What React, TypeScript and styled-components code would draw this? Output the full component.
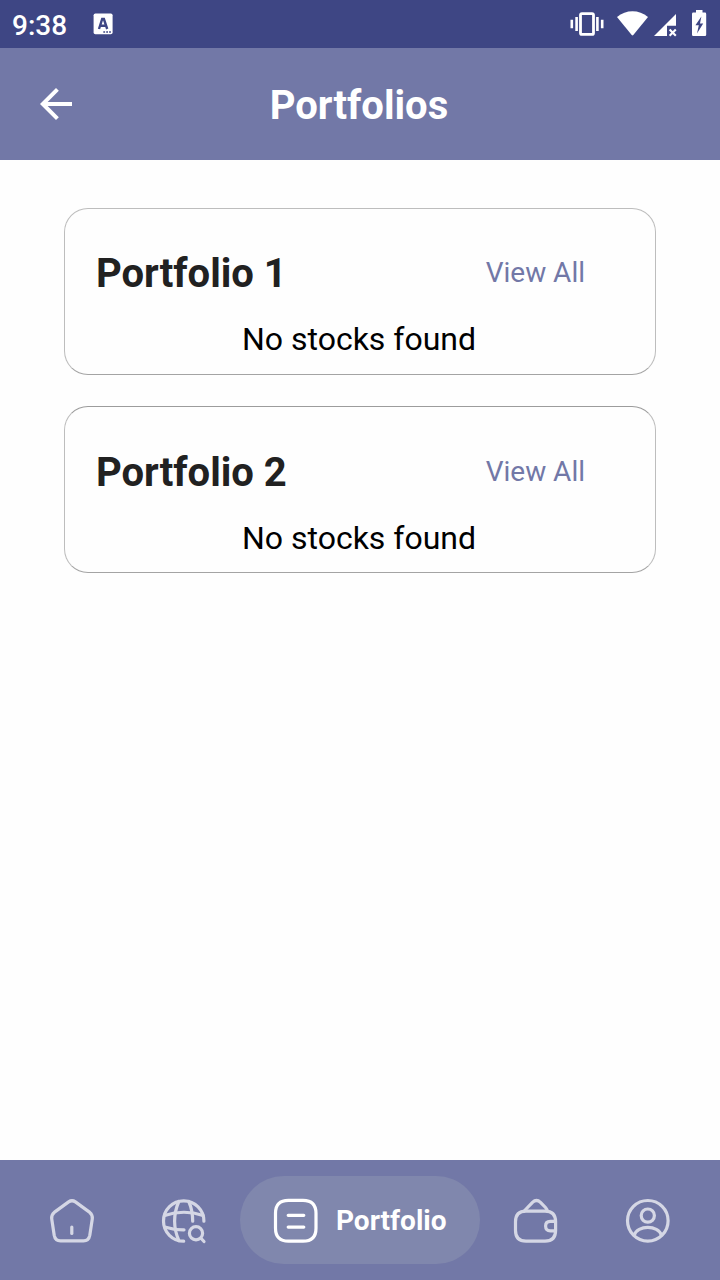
import React from "react";
import styled, { createGlobalStyle } from "styled-components";

const GlobalStyle = createGlobalStyle`
  * { box-sizing: border-box; }
  body {
    margin: 0;
    background: #fefefe;
    font-family: Roboto, "Liberation Sans", sans-serif;
  }
  button { border: 0; background: none; padding: 0; font: inherit; color: inherit; }
`;

const Screen = styled.div`
  display: flex;
  flex-direction: column;
  width: 720px;
  height: 1280px;
  overflow: hidden;
  background: #fefefe;
`;

const StatusBar = styled.div`
  display: flex;
  align-items: center;
  flex: 0 0 48px;
  padding: 0 12px;
  background: #3e4684;
  color: #fff;
`;

const Clock = styled.span`
  width: 80px;
  padding-top: 3px;
  font-size: 28px;
  font-weight: 500;
  line-height: 32px;
`;

const StatusIcons = styled.div`
  display: flex;
  align-items: center;
  margin-left: auto;
`;

const Glyph = styled.svg`
  display: block;
  flex: none;
`;

const Header = styled.header`
  display: grid;
  grid-template-columns: 48px 1fr 48px;
  align-items: center;
  flex: 0 0 112px;
  padding: 0 32px;
  background: #7278a7;
  color: #fff;
`;

const Title = styled.h1`
  margin: 0;
  padding: 3px 2px 0 0;
  text-align: center;
  font-size: 40px;
  font-weight: 700;
  line-height: 49px;
`;

const Content = styled.main`
  display: flex;
  flex: 1;
  flex-direction: column;
  gap: 31px;
  padding: 48px 64px;
`;

const Card = styled.section<{ $edge: string; $top: number }>`
  height: 167px;
  padding: ${(p) => p.$top}px 31px 0;
  border: 1px solid #bdbdbd;
  border-top-color: ${(p) => p.$edge};
  border-bottom-color: #a4a4a4;
  border-radius: 24px;
`;

const CardHead = styled.div`
  display: flex;
  align-items: center;
  justify-content: space-between;
  height: 48px;
  padding-right: 39px;
`;

const CardTitle = styled.h2`
  margin: 0;
  padding-top: 2px;
  color: #212121;
  font-size: 40px;
  font-weight: 700;
  line-height: 48px;
`;

const ViewAll = styled.button`
  color: #7278a7;
  font-size: 28px;
  line-height: 34px;
`;

const Empty = styled.p`
  margin: 23px 0 0;
  padding-right: 2px;
  color: #000;
  text-align: center;
  font-size: 32px;
  line-height: 38px;
`;

const NavBar = styled.nav`
  display: flex;
  align-items: center;
  flex: 0 0 120px;
  padding: 0 16px;
  background: #7278a7;
`;

const NavItem = styled.button<{ $active?: boolean }>`
  display: flex;
  align-items: center;
  justify-content: ${(p) => (p.$active ? "flex-start" : "center")};
  gap: 16px;
  width: ${(p) => (p.$active ? "240px" : "112px")};
  height: 88px;
  padding: ${(p) => (p.$active ? "0 0 0 32px" : "0")};
  border-radius: 44px;
  background: ${(p) => (p.$active ? "#8087ad" : "transparent")};
  color: ${(p) => (p.$active ? "#fff" : "#d5d7e5")};
  font-size: 28px;
  font-weight: 700;
`;

const NavGlyph = ({ children }: { children: React.ReactNode }) => (
  <Glyph width="48" height="48" viewBox="0 -1 48 48" fill="none" stroke="currentColor" strokeWidth="3.2" strokeLinecap="round" strokeLinejoin="round">
    {children}
  </Glyph>
);

const HomeIcon = () => (
  <NavGlyph>
    <path d="M20.6 4.9 6.2 15.4Q3.3 17.8 3.7 21.8L6.2 38.2Q7.2 43.8 12.5 43.8H35.5Q40.8 43.8 41.8 38.2L44.3 21.8Q44.7 17.8 41.8 15.4L27.4 4.9Q24 2.6 20.6 4.9Z" />
    <path d="M23.8 30V36.5" />
  </NavGlyph>
);

const GlobeIcon = () => (
  <NavGlyph>
    <path d="M43.9 24.2A20.2 20.2 0 1 0 23.7 44.2" />
    <path d="M18.8 4.5Q10.4 24 18.8 43.5M28.8 4.5Q32.7 13.5 32.7 24.2" />
    <path d="M4.6 18.5Q24 12 43.2 18.5M4.6 30Q13.5 32.9 24 32.8" />
    <circle cx="36" cy="36.2" r="6.6" />
    <path d="M41.2 41.5 44 44.5" />
  </NavGlyph>
);

const ListIcon = () => (
  <NavGlyph>
    <path d="M16.5 3.3H31Q44 3.3 44 16.3V31.2Q44 44.2 31 44.2H16.5Q3.5 44.2 3.5 31.2V16.3Q3.5 3.3 16.5 3.3Z" />
    <path d="M16.2 18.3H31.8M16.2 30.1H31.8" />
  </NavGlyph>
);

const WalletIcon = () => (
  <NavGlyph>
    <path d="M14 14.2H33Q43.6 14.2 43.6 24.8V33.6Q43.6 44.2 33 44.2H14Q3.5 44.2 3.5 33.6V24.8Q3.5 14.2 14 14.2Z" />
    <path d="M12.2 14 20.5 5.3Q24.5 1.6 28.5 5.3L33.5 10.5Q35 12.2 35.3 14" />
    <path d="M43.5 24.4H38.3Q33.6 24.4 33.6 29.1T38.3 33.8H43.5" />
  </NavGlyph>
);

const UserIcon = () => (
  <NavGlyph>
    <circle cx="23.8" cy="23.8" r="20.3" />
    <circle cx="23.8" cy="18.6" r="6.6" />
    <path d="M10.2 38.2C13.2 27.8 34.4 27.8 37.4 38.2" />
  </NavGlyph>
);

const BackIcon = () => (
  <Glyph width="48" height="48" viewBox="0 0 24 24" fill="currentColor">
    <path d="M20 11H7.83l5.59-5.59L12 4l-8 8 8 8 1.41-1.41L7.83 13H20v-2z" />
  </Glyph>
);

const KeyboardIcon = () => (
  <Glyph width="22" height="24" viewBox="0 0 22 24">
    <rect x="1.6" y="1.5" width="19" height="20.8" rx="1.8" fill="#fff" />
    <path d="M7 17 10.2 7H11.9L15.2 17M8.2 13.8H13.9" fill="none" stroke="#3e4684" strokeWidth="2.4" />
    <path d="M11.3 20H19" stroke="#3e4684" strokeWidth="1.7" strokeDasharray="1.8 1.1" />
  </Glyph>
);

const VibrateIcon = () => (
  <Glyph width="34" height="26" viewBox="0 0 34 26" fill="none" stroke="#fff">
    <rect x="10.5" y="2.6" width="13" height="20.8" rx="1.5" strokeWidth="2.8" />
    <path d="M1.8 8.7V17.3M32.2 8.7V17.3M6.6 6V20M27.4 6V20" strokeWidth="2.6" />
  </Glyph>
);

const WifiIcon = () => (
  <Glyph width="32" height="26" viewBox="0 0 32 26" fill="#fff">
    <path d="M0 7.1C9-.7 22-.7 31 7.1L16.3 25Q15.5 25.9 14.7 25Z" />
  </Glyph>
);

const SignalIcon = () => (
  <Glyph width="24" height="24" viewBox="0 0 24 24">
    <path d="M0 23 22 1V12.8H13V23Z" fill="#fff" />
    <path d="M15.6 16.6 21.8 22.8M21.8 16.6 15.6 22.8" stroke="#fff" strokeWidth="2.1" />
  </Glyph>
);

const BatteryIcon = () => (
  <Glyph width="15" height="26" viewBox="0 0 15 26">
    <path d="M4 0H10.5V2.6H13Q14.2 2.6 14.2 3.9V24.7Q14.2 26 13 26H1.3Q0 26 0 24.7V3.9Q0 2.6 1.3 2.6H4Z" fill="#fff" />
    <path d="M9.4 6.6 3.4 15.3H6.8L5 23.4 11.2 13.4H8Z" fill="#3e4684" />
  </Glyph>
);

const portfolios = [
  { name: "Portfolio 1", edge: "#bdbdbd", top: 40 },
  { name: "Portfolio 2", edge: "#9c9c9c", top: 41 },
];

const VibrateSlot = styled.div`margin-right: 13px;`;
const WifiSlot = styled.div`margin: -2px 5px 0 0;`;
const SignalSlot = styled.div`margin: 2px 14px 0 0;`;
const BatterySlot = styled.div`margin: -2px 1px 0 0;`;

export default function App() {
  return (
    <>
      <GlobalStyle />
      <Screen>
        <StatusBar>
          <Clock>9:38</Clock>
          <KeyboardIcon />
          <StatusIcons>
            <VibrateSlot><VibrateIcon /></VibrateSlot>
            <WifiSlot><WifiIcon /></WifiSlot>
            <SignalSlot><SignalIcon /></SignalSlot>
            <BatterySlot><BatteryIcon /></BatterySlot>
          </StatusIcons>
        </StatusBar>
        <Header>
          <button aria-label="Back"><BackIcon /></button>
          <Title>Portfolios</Title>
        </Header>
        <Content>
          {portfolios.map((p) => (
            <Card key={p.name} $edge={p.edge} $top={p.top}>
              <CardHead>
                <CardTitle>{p.name}</CardTitle>
                <ViewAll>View All</ViewAll>
              </CardHead>
              <Empty>No stocks found</Empty>
            </Card>
          ))}
        </Content>
        <NavBar>
          <NavItem aria-label="Home"><HomeIcon /></NavItem>
          <NavItem aria-label="Markets"><GlobeIcon /></NavItem>
          <NavItem $active><ListIcon />Portfolio</NavItem>
          <NavItem aria-label="Wallet"><WalletIcon /></NavItem>
          <NavItem aria-label="Profile"><UserIcon /></NavItem>
        </NavBar>
      </Screen>
    </>
  );
}
